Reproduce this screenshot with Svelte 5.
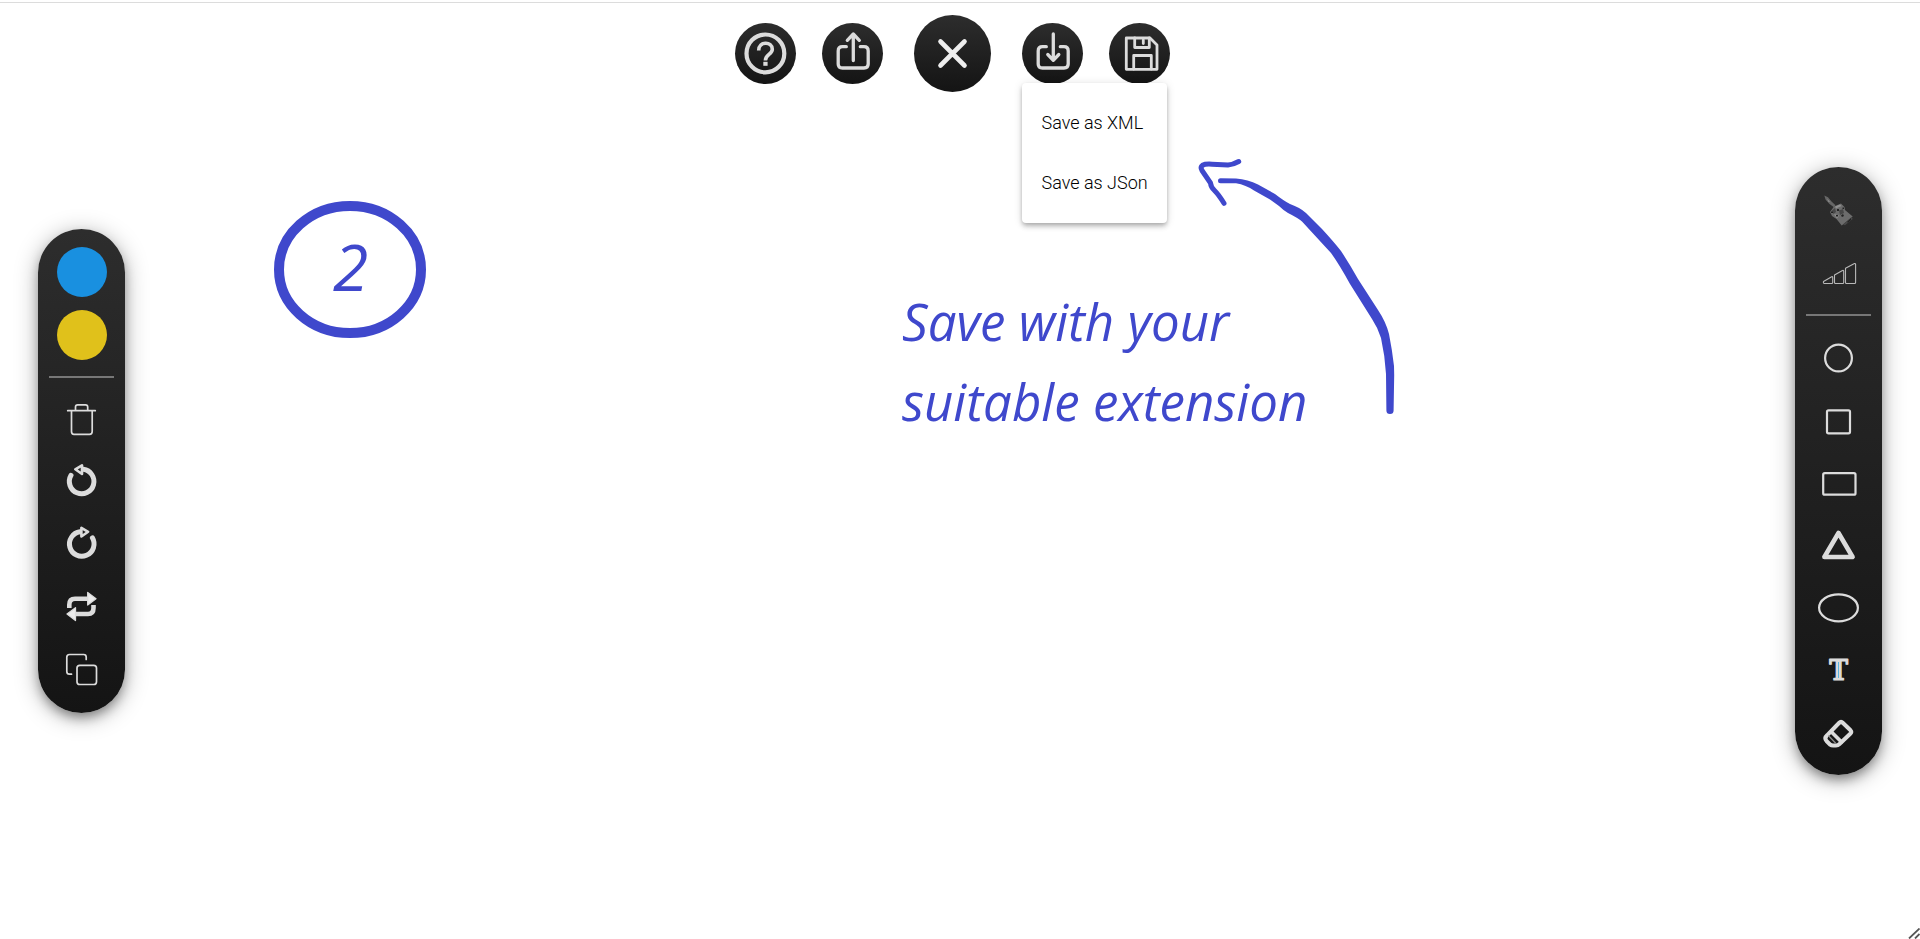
<script>
  let primary = $state('#1990e0');
  let secondary = $state('#e0c11b');
  let menuOpen = $state(true);
</script>

<div class="app">
  <div class="canvas">
    <svg class="ink" aria-hidden="true">
      <ellipse cx="350" cy="269.5" rx="71" ry="63.5" fill="none" stroke="#3f48cc" stroke-width="10" />
      <path
        fill="#3f48cc"
        d="M1220.5 178.3L1236 178.5Q1248 179.3 1258 184.5L1275 194Q1284 201 1290 204Q1300 207.5 1306 213L1322 229Q1334 242 1341 251Q1349 263 1358 279L1378 310Q1386 322 1389 334Q1392 349 1394 366L1394.2 375L1393.6 410.500A3.600 3.600 0 0 1 1386.400 410.500L1386 374Q1385 356 1381 338Q1378 328 1372 319L1350 284Q1339 264 1331 253L1302 221.500Q1298 218 1288 213Q1283 210 1279 206L1270 199.500L1254 190.500Q1246 185 1236 183.300H1220.500A2.500 2.500 0 0 1 1220.500 178.300Z"
      />
      <path
        fill="none"
        stroke="#3f48cc"
        stroke-width="5"
        stroke-linecap="round"
        stroke-linejoin="round"
        d="M1238.700 161.500Q1233 164.700 1228 165L1212 164.200Q1205 163.800 1202.500 165.200Q1200 167 1202 170.500L1210.500 183Q1210.800 187 1214.500 190.500Q1219 195 1224 203.300"
      />
    </svg>
    <span class="note step">2</span>
    <p class="note hint">Save with your<br />suitable extension</p>
  </div>

  <aside class="toolbar" aria-label="Edit">
    <div class="swatches">
      <button class="swatch" style="background: {primary}" aria-label="Primary colour"></button>
      <button class="swatch" style="background: {secondary}" aria-label="Secondary colour"></button>
    </div>
    <hr />
    <div class="tools">
      <button class="tool" aria-label="Delete">
        <svg viewBox="0 0 50 50" stroke-width="1.7">
          <path d="M10.700 15.700H38.300M18.500 15.500V12Q18.500 9.800 20.700 9.800H28.500Q30.700 9.800 30.700 12V15.500M14.500 16V36.500Q14.500 39.300 17 39.300H32.500Q35.200 39.300 35.200 36.500V16" />
        </svg>
      </button>
      <button class="tool" aria-label="Undo">
        <svg viewBox="0 0 50 50">
          <path stroke-width="5" d="M14 18.300A12.300 12.300 0 1 0 26.400 12.300" />
          <path stroke-width="2.600" fill="#242424" d="M18.300 12.300L25 8.300V17Z" />
        </svg>
      </button>
      <button class="tool" aria-label="Redo">
        <svg viewBox="0 0 50 50">
          <path stroke-width="5" d="M35.400 18.800A12.300 12.300 0 1 1 23 12.800" />
          <path stroke-width="2.600" fill="#202020" d="M31.100 12.800L24.400 8.800V17.500Z" />
        </svg>
      </button>
      <button class="tool" aria-label="Swap">
        <svg viewBox="0 0 50 50">
          <g stroke-width="4.600" stroke-linecap="butt">
            <path d="M12.300 27V23.700Q12.300 17.700 18 17.700H31" />
            <path d="M36.500 24V27Q36.500 33 31 33H18" />
          </g>
          <path fill="#ececec" stroke-width="1.300" d="M30.700 11.500V24L39 17.700ZM18.500 26.700V39.500L10 33Z" />
        </svg>
      </button>
      <button class="tool" aria-label="Duplicate">
        <svg viewBox="0 0 50 50" stroke-width="1.700">
          <rect x="20" y="22.300" width="19.500" height="19.200" rx="2.800" />
          <path d="M29.200 16.500V14Q29.200 11.500 26.700 11.500H12.500Q9.800 11.500 9.800 14.200V28.500Q9.800 31.200 12.500 31.200H14.500" />
        </svg>
      </button>
    </div>
  </aside>

  <header>
    <button class="round" aria-label="Help">
      <svg viewBox="0 0 61 61">
        <circle cx="30.400" cy="30.400" r="18.900" stroke-width="4.200" />
        <path stroke-width="3.600" stroke-linecap="butt" d="M23.700 27.500C23.700 18 37.300 18 37.300 26.200C37.300 31.500 30.400 31.500 30.400 37.500" />
        <rect x="28.300" y="38.800" width="4.300" height="4" fill="#dcdcdc" stroke="none" />
      </svg>
    </button>
    <button class="round" aria-label="Share">
      <svg viewBox="0 0 61 61" stroke-width="3.300">
        <path d="M24.300 23.700H20.500Q16.200 23.700 16.200 28V41Q16.200 45 20.500 45H42Q46.200 45 46.200 41V28Q46.200 23.700 42 23.700H38.300" />
        <path d="M31.300 37.500V12M25.300 17.300L31.300 11L37.300 17.300" />
      </svg>
    </button>
    <button class="round big" aria-label="Close">
      <svg viewBox="0 0 77 77" stroke-width="4.600">
        <path style:stroke="#eee" d="M26.500 26.500L50.500 50.500M50.500 26.500L26.500 50.500" />
      </svg>
    </button>
    <div class="dropdown">
      <button class="round" aria-label="Download" aria-expanded={menuOpen} onclick={() => (menuOpen = !menuOpen)}>
        <svg viewBox="0 0 61 61" stroke-width="3.300">
          <path d="M24.300 23.700H20.500Q16.200 23.700 16.200 28V41Q16.200 45 20.500 45H42Q46.200 45 46.200 41V28Q46.200 23.700 42 23.700H38.300" />
          <path d="M31.300 11V37M25.800 31.500L31.300 37.300L36.800 31.500" />
        </svg>
      </button>
      {#if menuOpen}
        <div class="menu">
          <button>Save as XML</button>
          <button>Save as JSon</button>
        </div>
      {/if}
    </div>
    <button class="round" aria-label="Save">
      <svg viewBox="0 0 61 61" stroke-width="2.800" stroke-linejoin="miter">
        <path d="M17.300 15H41L48 22V46.300H17.300Z" />
        <path d="M25.700 15V24.500H40.300V15M34.300 17V20.500M24.700 46V32.500H42.300V46" />
      </svg>
    </button>
  </header>

  <aside class="toolbar" aria-label="Shapes">
    <div class="swatches">
      <button class="tool" aria-label="Brush">
        <svg viewBox="0 0 50 50" stroke="none">
          <path class="bare" fill="#666" d="M10.300 10.500L14 12.200L17.500 16.500L21.500 20.300L20 22.300L15.500 19L11.500 14.500Z" />
          <path class="bare" fill="#6c6c6c" d="M16 27L20 21.500L27 18.500L30.500 22L31 25L38.700 31.500L27.700 40.500L22.500 34L18 31Z" />
          <path class="bare" fill="#484848" d="M18 25.500L21 23L22 27L19.500 29ZM25 25.500L29 24L30 28L26 30ZM29 39.500L37.700 32L38.700 34L31 40.300Z" />
          <path class="bare" fill="#909090" d="M21 21.500L26 19.500L27.500 21L22 23.500ZM20 29L25 30.500L23 33.500ZM13 13.500L16 17L14.500 17Z" />
          <path class="bare" fill="#222" d="M23 24H25V26H23ZM17 26.500H19V28H17ZM27 30.500L29 29L30 31L28 32ZM22 30H24V31.500H22ZM28.500 22.500H30V24H28.500ZM33 37L37 33V35L34 37.500Z" />
        </svg>
      </button>
      <button class="tool" aria-label="Line thickness">
        <svg viewBox="0 0 50 50" stroke-width="1.100" style:stroke="#b8b8b8">
          <path d="M9.500 33.500L17.700 28.700Q18.700 28.400 18.700 29.500V34.500Q18.700 35.500 17.700 35.500H10.500Q9 35.500 9.500 33.500ZM20.500 27L28.500 22.400Q29.700 22 29.700 23.200V34.500Q29.700 35.500 28.700 35.500H21.500Q20.500 35.500 20.500 34.500ZM31.500 20.200L40.500 15.500Q41.600 15.200 41.600 16.500V34.500Q41.600 35.500 40.600 35.500H32.500Q31.500 35.500 31.500 34.500Z" />
        </svg>
      </button>
    </div>
    <hr />
    <div class="tools">
      <button class="tool" aria-label="Circle">
        <svg viewBox="0 0 50 50" stroke-width="2.200"><circle cx="24.500" cy="25" r="13.400" /></svg>
      </button>
      <button class="tool" aria-label="Square">
        <svg viewBox="0 0 50 50" stroke-width="2.200"><rect x="13" y="15.300" width="23" height="23" rx="1.500" /></svg>
      </button>
      <button class="tool" aria-label="Rectangle">
        <svg viewBox="0 0 50 50" stroke-width="2.200"><rect x="9.200" y="16.200" width="32.300" height="21.500" rx="1.500" /></svg>
      </button>
      <button class="tool" aria-label="Triangle">
        <svg viewBox="0 0 50 50" stroke-width="4.600"><path d="M24.500 14L38.600 38H10.400Z" /></svg>
      </button>
      <button class="tool" aria-label="Ellipse">
        <svg viewBox="0 0 50 50" stroke-width="2.200"><ellipse cx="24.500" cy="26.800" rx="19.400" ry="13.500" /></svg>
      </button>
      <button class="tool" aria-label="Text">
        <svg viewBox="0 0 50 50">
          <text class="letter" x="24.500" y="37" text-anchor="middle">T</text>
          <path stroke-width="1" style:stroke="#5bb5e0" stroke-linecap="butt" d="M24.500 19V35" />
        </svg>
      </button>
      <button class="tool" aria-label="Eraser">
        <svg viewBox="0 0 50 50">
          <path stroke-width="4" d="M25 18L13 30.300Q10 33 12.500 36L16 39.500Q17.500 40.500 19 40.500H22Q24 40.500 25.500 39L36.500 28.500Q38 27 36.500 25.300L29 18Q27 16 25 18Z" />
          <path stroke-width="3.600" d="M18 27.500L27.500 37" />
          <path stroke-width="1.300" d="M14.800 31L21.500 38" style:stroke="#8a8a8a" />
        </svg>
      </button>
    </div>
  </aside>

  <svg class="grip" viewBox="0 0 12 11" aria-hidden="true">
    <path d="M1 10.500L11.500 .5M7 10.500L11.500 6" fill="none" stroke="#555" stroke-width="1.800" />
  </svg>
</div>

<style>
  :global(body) {
    background: #fff;
  }
  .app {
    position: relative;
    box-sizing: border-box;
    min-height: 100vh;
    margin: 0;
    padding: 3px 38px 0;
    display: grid;
    grid-template-columns: auto 1fr auto;
    align-items: center;
    font-family: Roboto, sans-serif;
    overflow: hidden;
  }
  .app::before {
    content: '';
    position: absolute;
    top: 2px;
    left: 0;
    right: 0;
    height: 1px;
    background: #dcdcdc;
  }
  .canvas {
    position: absolute;
    inset: 0;
  }
  .ink {
    position: absolute;
    width: 100%;
    height: 100%;
  }
  .note {
    position: absolute;
    margin: 0;
    color: #3f48cc;
    font-family: 'Open Sans', 'Noto Sans', sans-serif;
    font-style: italic;
    white-space: nowrap;
  }
  .step {
    left: 333px;
    top: 227px;
    font-size: 64px;
    line-height: 80px;
  }
  .hint {
    left: 902px;
    top: 281px;
    font-size: 51px;
    line-height: 80px;
  }
  button {
    padding: 0;
    border: 0;
    background: none;
    font: inherit;
    cursor: pointer;
  }
  button svg {
    display: block;
    width: 100%;
    height: 100%;
    fill: none;
    stroke: #dcdcdc;
    stroke-linecap: round;
    stroke-linejoin: round;
  }
  button svg .bare {
    stroke: none;
  }
  header {
    position: relative;
    align-self: start;
    display: flex;
    justify-content: center;
    align-items: center;
    gap: 26px;
    padding: 12px 16px 0 0;
  }
  .round {
    display: block;
    width: 61px;
    height: 61px;
    border-radius: 50%;
    background: linear-gradient(#2d2d2d, #141414);
  }
  .big {
    width: 77px;
    height: 77px;
    margin: 0 5px;
  }
  .dropdown {
    position: relative;
  }
  .menu {
    position: absolute;
    top: 60px;
    left: 0;
    width: 145px;
    box-sizing: border-box;
    padding: 9px 0 11px;
    display: flex;
    flex-direction: column;
    background: #fff;
    border-radius: 4px;
    box-shadow:
      0 2px 4px -1px rgba(0, 0, 0, 0.2),
      0 4px 5px rgba(0, 0, 0, 0.14),
      0 1px 10px rgba(0, 0, 0, 0.12);
  }
  .menu button {
    height: 60px;
    padding-left: 20px;
    text-align: left;
    font-size: 18px;
    font-weight: 300;
    color: #000;
    white-space: nowrap;
  }
  .toolbar {
    position: relative;
    width: 87px;
    box-sizing: border-box;
    padding: 18px 18px 20px 19px;
    border-radius: 44px;
    background: linear-gradient(#2d2d2d, #141414);
    box-shadow:
      0 6px 12px -2px rgba(0, 0, 0, 0.4),
      0 4px 22px 2px rgba(0, 0, 0, 0.25);
  }
  .swatches,
  .tools {
    display: flex;
    flex-direction: column;
    gap: 12px;
  }
  .swatches {
    gap: 13px;
  }
  .swatch,
  .tool {
    width: 50px;
    height: 50px;
  }
  .swatch {
    border-radius: 50%;
  }
  hr {
    height: 2px;
    margin: 16px -7px 17px -8px;
    border: 0;
    background: #777;
  }
  .letter {
    font: bold 28px 'DejaVu Serif Condensed', 'DejaVu Serif', serif;
    fill: #dcdcdc;
    stroke: #dcdcdc;
    stroke-width: 1.2;
  }
  .grip {
    position: absolute;
    right: 0;
    bottom: 0;
    width: 12px;
    height: 11px;
  }
</style>
